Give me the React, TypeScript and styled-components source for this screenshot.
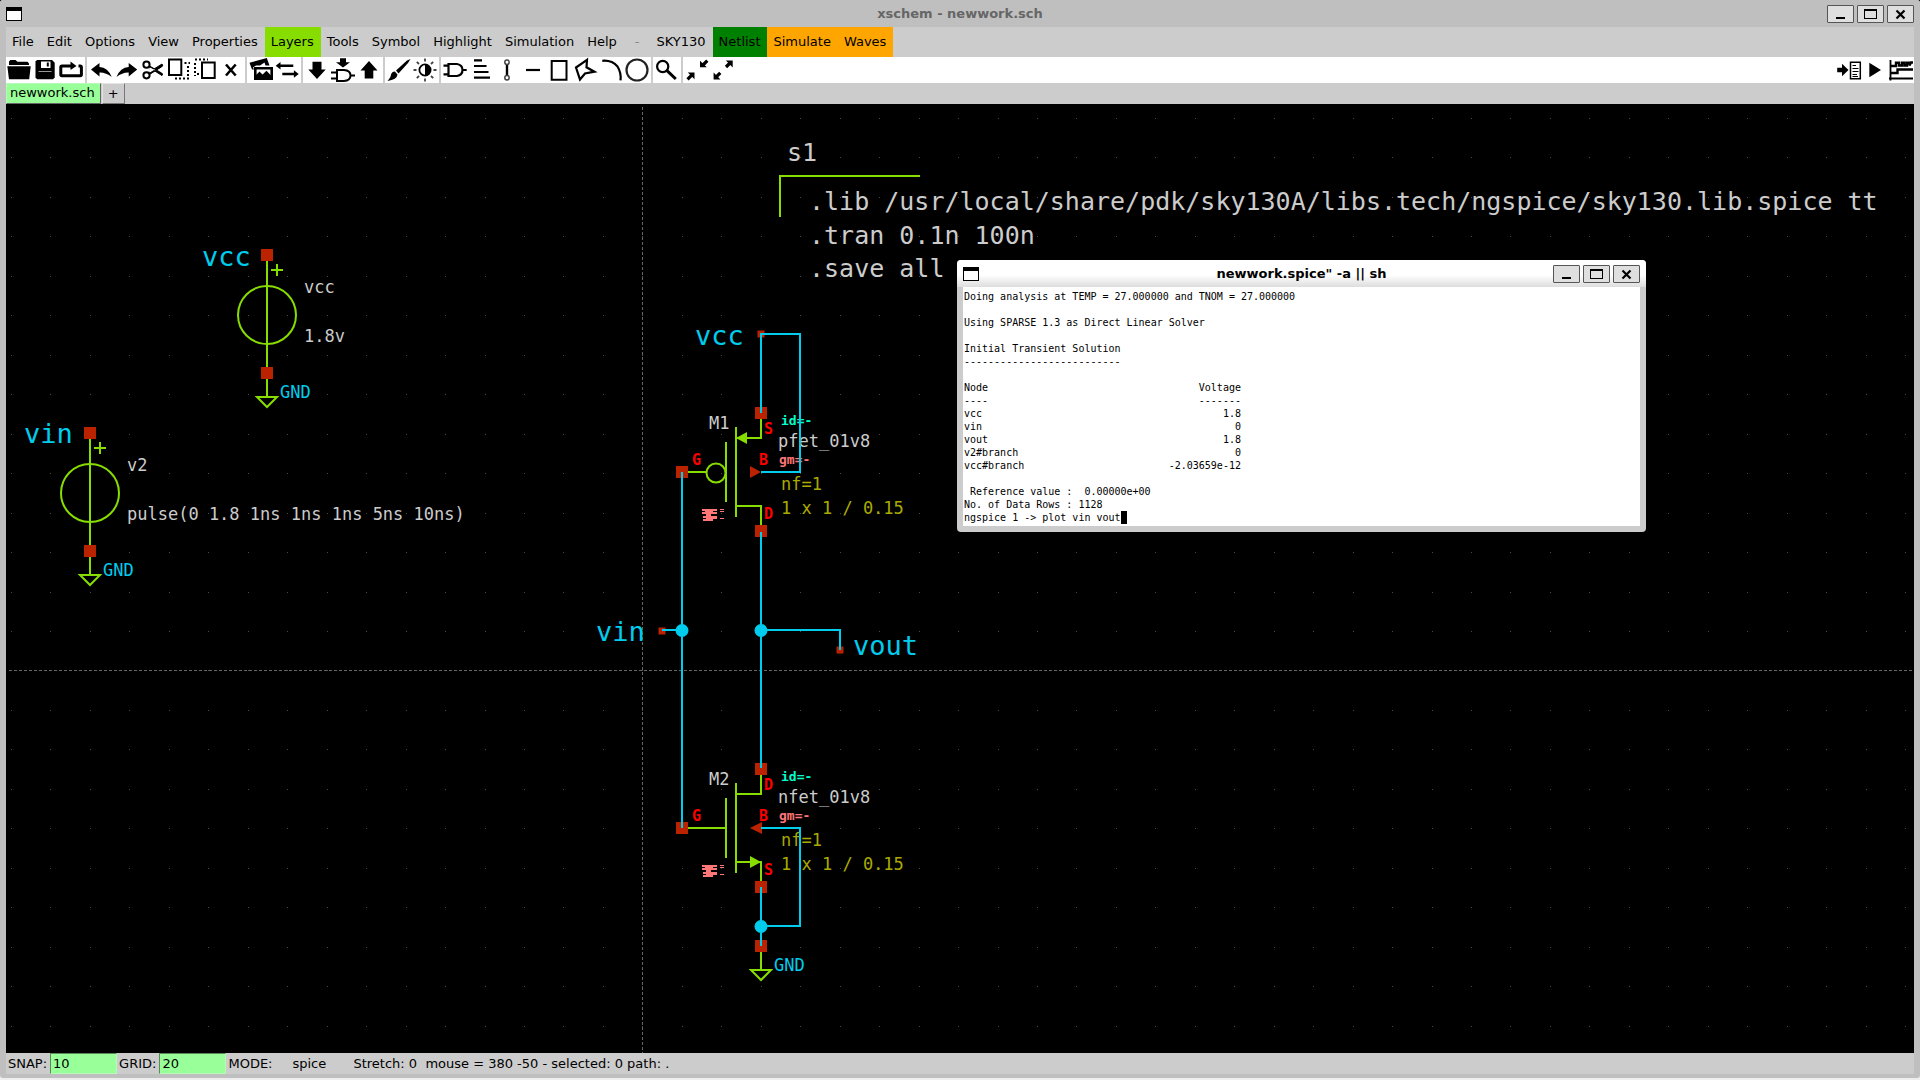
import React from "react";
import styled, { createGlobalStyle } from "styled-components";

const GlobalStyle = createGlobalStyle`
  *, *::before, *::after { box-sizing: border-box; }
  html, body { margin: 0; padding: 0; height: 100%; background: #eeeeee; }
  #root { height: 100%; }
  button, input { font: inherit; color: inherit; margin: 0; }
`;

const green = "#88dd00";
const cyan = "#00ccee";
const pinRed = "#bb2200";
const grey = "#cccccc";
const mono = '"DejaVu Sans Mono", "Liberation Mono", monospace';

/* ---------- window frame ---------- */

const Desktop = styled.div`
  min-height: 100vh;
  height: 100%;
  display: flex;
  padding-bottom: 2px;
  background: linear-gradient(#000000 50%, #eeeeee 50%);
  font-family: "DejaVu Sans", "Noto Sans", sans-serif;
  font-size: 13px;
  line-height: 20px;
  color: #000000;
`;

const MainWindow = styled.main`
  flex: 1;
  min-width: 0;
  display: flex;
  flex-direction: column;
  background: #bfbfbf;
  border-radius: 3px;
  overflow: hidden;
`;

const TitleBar = styled.header<{ $active?: boolean }>`
  display: grid;
  grid-template-columns: 1fr auto 1fr;
  align-items: center;
  height: 27px;
  padding: 1px 6px 0;
  background: ${(p) => (p.$active ? "linear-gradient(#ffffff 55%, #dddddd)" : "#bfbfbf")};
  color: ${(p) => (p.$active ? "#000000" : "#666666")};
`;

const Title = styled.h1`
  margin: 0;
  font-size: 13px;
  line-height: 20px;
  font-weight: bold;
  white-space: pre;
`;

const WindowIcon = styled.button`
  width: 16px;
  height: 14px;
  padding: 0;
  background: #ffffff;
  border: 1px solid #000000;
  border-top-width: 4px;
`;

const WindowButtons = styled.div`
  display: flex;
  justify-content: flex-end;
  gap: 3px;
`;

const WindowButton = styled.button`
  width: 27px;
  height: 18px;
  padding: 0;
  display: grid;
  place-items: center;
  background: #dfdfdf;
  border: 1px solid #555555;
  border-radius: 1px;
  svg { display: block; }
`;

const Frame = styled.div`
  flex: 1;
  min-height: 0;
  display: flex;
  flex-direction: column;
  margin: 0 6px 4px;
  background: ${grey};
`;

/* ---------- menu ---------- */

const MenuBar = styled.nav`
  display: flex;
  height: 30px;
`;

const MenuItem = styled.button<{ $bg?: string; $dim?: boolean }>`
  height: 30px;
  padding: ${(p) => (p.$dim ? "0 11px" : "0 7px 0 6px")};
  border: 0;
  background: ${(p) => p.$bg ?? "transparent"};
  color: ${(p) => (p.$dim ? "#888888" : "#000000")};
`;

/* ---------- toolbar ---------- */

const ToolBar = styled.div`
  display: flex;
  height: 26px;
  background: #ffffff;
`;

const ToolButton = styled.button`
  width: 26px;
  height: 26px;
  padding: 0;
  border: 0;
  background: transparent;
  svg { display: block; }
`;

const ToolSeparator = styled.span`
  width: 2px;
  margin: 0 1px;
  background: ${grey};
`;

const Spacer = styled.span`
  flex: 1;
`;

/* ---------- tabs ---------- */

const TabRow = styled.div`
  display: flex;
  height: 21px;
  gap: 1px;
`;

const Tab = styled.button<{ $active?: boolean }>`
  height: 21px;
  padding: ${(p) => (p.$active ? "0 5px 2px 3px" : "0 5px")};
  line-height: 16px;
  background: ${(p) => (p.$active ? "#99ff99" : grey)};
  border: 1px solid;
  border-color: ${(p) => (p.$active ? "#b8f8b8 #666666 #666666 #b8f8b8" : "#e4e4e4 #777777 #777777 #e4e4e4")};
`;

/* ---------- canvas ---------- */

const Canvas = styled.section`
  position: relative;
  flex: 1;
  min-height: 0;
  background: #000000;
  overflow: hidden;
`;

const Drawing = styled.svg`
  display: block;
  width: 100%;
  height: 100%;
`;

const Label = styled.text<{ $size?: number; $bold?: boolean }>`
  font-family: ${mono};
  font-size: ${(p) => p.$size ?? 17}px;
  font-weight: ${(p) => (p.$bold ? "bold" : "normal")};
  white-space: pre;
`;

/* ---------- terminal window ---------- */

const Terminal = styled.section`
  position: absolute;
  left: 951px;
  top: 156px;
  width: 689px;
  background: ${grey};
  border-radius: 4px;
  overflow: hidden;
`;

const Output = styled.pre`
  margin: 0 6px 6px;
  padding: 3px 1px 2px;
  background: #ffffff;
  font-family: ${mono};
  font-size: 10px;
  line-height: 13px;
`;

const Cursor = styled.span`
  display: inline-block;
  width: 6px;
  height: 13px;
  background: #000000;
  vertical-align: top;
`;

/* ---------- status ---------- */

const StatusBar = styled.footer`
  display: flex;
  align-items: center;
  height: 21px;
  padding-left: 2px;
  white-space: pre;
`;

const StatusLabel = styled.label`
  padding: 0 3px 0 0;
`;

const StatusInput = styled.input`
  width: 67px;
  height: 21px;
  padding: 0 2px;
  margin-right: 2px;
  border: 1px solid;
  border-color: #5a8a5a #b8f8b8 #b8f8b8 #5a8a5a;
  background: #99ff99;
  outline: 0;
`;

const Mode = styled.span`
  width: 64px;
`;

const ModeValue = styled.span`
  width: 61px;
`;

/* ---------- icons ---------- */

type IconDef = { name: string; art: React.ReactNode };

const line = { fill: "none", stroke: "#000", strokeWidth: 2 } as const;

const toolGroups: IconDef[][] = [
  [
    {
      name: "Open",
      art: (
        <>
          <path d="M3 8V4.500L4.500 3h5l2 1.700H21.500L23 6.500V8z" />
          <path d="M1.300 9.300H24.700L23.200 22.300H3z" />
        </>
      ),
    },
    {
      name: "Save",
      art: (
        <>
          <path d="M5 3H20L22.700 5.800V20.500L21 22.200H5L3.500 20.500V4.500z" />
          <path d="M9 4.500h9.500v6.500H9z" fill="#fff" />
          <path d="M14.800 5.500h2v4h-2z" />
          <path d="M6.500 14.500H19.500" stroke="#999" strokeWidth="1" />
        </>
      ),
    },
    {
      name: "Reload",
      art: (
        <>
          <path d="M9 9H4Q2.800 9 2.800 10.200V17.500Q2.800 18.700 4 18.700H22.200Q23.400 18.700 23.400 17.500V10.200Q23.400 9 22.200 9H20.500M7 9H14" {...line} strokeWidth={3} />
          <path d="M12.500 4.500L18.500 8.900L12.500 13z" />
        </>
      ),
    },
  ],
  [
    { name: "Undo", art: <path d="M3 12.500L11.500 6V10Q20 10.500 23.700 20Q18 15.300 11.500 15.500V19.500z" /> },
    { name: "Redo", art: <path d="M23.200 12.500L14.700 6V10Q6.200 10.500 2.500 20Q8.200 15.300 14.700 15.500V19.500z" /> },
    {
      name: "Cut",
      art: (
        <>
          <circle cx="6.500" cy="7.700" r="3.100" {...line} />
          <circle cx="6.500" cy="18.300" r="3.100" {...line} />
          <path d="M9 9.500L14 12L22 7Q24 9 21 10.200L9.500 17.500M9 16.500L14 13.500L22 18.500Q24 17 21 15.700L9.500 9" stroke="#000" strokeWidth="1" />
        </>
      ),
    },
    {
      name: "Copy",
      art: (
        <>
          <path d="M3 2.500H15.300V18H3z" {...line} />
          <path d="M18.500 6H24M9 21.500H23.500M22 9V21" {...line} strokeDasharray="2 2" />
        </>
      ),
    },
    {
      name: "Move",
      art: (
        <>
          <path d="M10 5.500H22.700V21H10z" {...line} />
          <path d="M3 2.500H16M3 6V19M7 17H3" {...line} strokeDasharray="2 2" />
        </>
      ),
    },
    { name: "Delete", art: <path d="M8 7.500L17.700 18.500M17.700 7.500L8 18.500" {...line} strokeWidth={2.6} /> },
  ],
  [
    {
      name: "Insert image",
      art: (
        <>
          <path d="M1.500 5.800L18.800 1L21.500 8.500H17.500L16.500 5.500L12 8.500H8L5 10.500L6 12.500H4z" />
          <path d="M7.300 11.300H23.700V21.700H7.300z" {...line} strokeWidth={2.6} />
          <path d="M8 21V18L11.500 14.500L14.500 17.500L18.500 13.800L23 18.500V21z" />
        </>
      ),
    },
    {
      name: "Swap",
      art: (
        <>
          <path d="M5 8.700H19.300M8.300 17H21" {...line} strokeWidth={2.6} />
          <path d="M1.700 8.700L6.500 5V12.400zM24.700 17L19.900 13.300V20.700z" />
        </>
      ),
    },
  ],
  [
    { name: "Descend", art: <path d="M8.500 4.700H17.500V12.500H21.700L13 22L4.300 12.500H8.500z" /> },
    {
      name: "Descend symbol",
      art: (
        <>
          <path d="M10 1.300h6v4h4L13 10.500L6 5.300h4z" />
          <path d="M7 13H14Q20.500 13.500 20.500 18.500Q20.500 23.500 14 24H7zM1 15.500H7M1 21.500H7M20.500 18.500H25" {...line} />
        </>
      ),
    },
    { name: "Ascend", art: <path d="M8.700 21.500H17.300V13.500H21.500L13 4L4.500 13.500H8.700z" /> },
  ],
  [
    {
      name: "Highlight net",
      art: (
        <>
          <path d="M24.500 2L21 3.500L10 13.500L12.500 16.500L22 6z" />
          <path d="M8.800 14.500L11.500 17.500Q11 22.500 1.500 24Q5 20 5 17.500Q6 14.500 8.800 14.500z" />
        </>
      ),
    },
    {
      name: "Toggle colours",
      art: (
        <>
          <circle cx="13" cy="13" r="5.600" {...line} strokeWidth={1.8} />
          <path d="M13 7.500A5.500 5.500 0 0 1 13 18.500z" />
          <path d="M13 1.500V4.500M13 21.500V24.500M1.500 13H4.500M21.500 13H24.500M4.800 4.800L7 7M19 19L21.200 21.200M21.200 4.800L19 7M7 19L4.800 21.200" fill="none" stroke="#444" strokeWidth="1.800" />
        </>
      ),
    },
  ],
  [
    { name: "Place symbol", art: <path d="M6.500 7H15Q20.500 8 20.500 13Q20.500 18 15 19H6.500zM1.500 8.700H7M1.500 17.300H7M20 13H24.700" {...line} strokeWidth={2.2} /> },
    { name: "Place text", art: <path d="M6 3.300H14M6 9H18.500M6 15H20.500M6 20.700H22" {...line} strokeWidth={2.2} /> },
    {
      name: "Place wire",
      art: (
        <>
          <path d="M13 7.500V18.500" {...line} strokeWidth={2.4} />
          <circle cx="13" cy="5.300" r="2.200" fill="none" stroke="#444" strokeWidth="1.500" />
          <circle cx="13" cy="20.700" r="2.200" fill="none" stroke="#444" strokeWidth="1.500" />
        </>
      ),
    },
    { name: "Place line", art: <path d="M6 13H20" {...line} strokeWidth={2.2} /> },
    { name: "Place rectangle", art: <path d="M5.700 4H20.500V22.700H5.700z" {...line} /> },
    { name: "Place polygon", art: <path d="M15 2.800L4 10.500L8 22.500L13 16.500L22.500 14.700L14.500 10.300z" {...line} strokeWidth={2.2} /> },
    { name: "Place arc", art: <path d="M4.300 3.800Q14 3 19.500 9.500Q23.500 16 22.500 23.300" {...line} strokeWidth={2.2} /> },
    { name: "Place circle", art: <circle cx="13" cy="13" r="10.500" {...line} strokeWidth={2.2} stroke="#222" /> },
  ],
  [
    {
      name: "Zoom box",
      art: (
        <>
          <circle cx="8.700" cy="9.500" r="5.600" {...line} strokeWidth={2.2} />
          <path d="M12.500 13.200L21.800 22" {...line} strokeWidth={3} />
        </>
      ),
    },
  ],
  [
    {
      name: "Zoom out",
      art: (
        <>
          <path d="M3.500 22.300L8 17.800M23.300 3.700L19 8" {...line} strokeWidth={3.2} />
          <path d="M3.800 15.500H10.500V22.300zM22.800 10.300H16V3.700z" />
        </>
      ),
    },
    {
      name: "Zoom fit",
      art: (
        <>
          <path d="M10.300 15.900L6 20.200M16 10L20.500 5.500" {...line} strokeWidth={3.2} />
          <path d="M3.600 15.500V22.500H10.500zM22.700 10.500V3.500H15.900z" />
        </>
      ),
    },
  ],
];

const runTools: IconDef[] = [
  {
    name: "Netlist",
    art: (
      <>
        <path d="M1.200 10.700H6V6.700L12.500 13L6 19.300V15.300H1.200z" />
        <path d="M14.500 5.200H24.300V21.800H14.500z" fill="none" stroke="#000" strokeWidth="1.500" />
        <path d="M16.500 8.500H20M16.500 11.500H22.500M16.500 14.500H22.500M16.500 17.500H21M16.500 19.500H22" fill="none" stroke="#000" strokeWidth="1.200" />
      </>
    ),
  },
  { name: "Simulate", art: <path d="M7.300 5.700L19 13L7.300 20.300z" /> },
  {
    name: "Waves",
    art: (
      <>
        <path d="M2.500 3V23.500M1 21.500H25" {...line} strokeWidth={1.8} />
        <path d="M3 9H8V5.700H11V8.500H14V5.700H16.500V8.500H19V5.700H21.500V8.500L23 5.500H25M3 16H9.500V12.500H25" {...line} strokeWidth={2.4} />
      </>
    ),
  },
];

const Tool = ({ icon }: { icon: IconDef }) => (
  <ToolButton type="button" aria-label={icon.name}>
    <svg width="26" height="26" viewBox="0 0 26 26" aria-hidden="true">
      {icon.art}
    </svg>
  </ToolButton>
);

const Controls = () => (
  <WindowButtons>
    <WindowButton type="button" aria-label="Minimise">
      <svg width="13" height="12" shapeRendering="crispEdges">
        <path d="M2 9h9v2H2z" />
      </svg>
    </WindowButton>
    <WindowButton type="button" aria-label="Maximise">
      <svg width="13" height="12" shapeRendering="crispEdges">
        <path d="M0 1h13v10H0zM1 3v7h11V3z" fillRule="evenodd" />
      </svg>
    </WindowButton>
    <WindowButton type="button" aria-label="Close">
      <svg width="13" height="12">
        <path d="M2.500 2.500L10.500 10.500M10.500 2.500L2.500 10.500" {...line} strokeWidth={2.2} />
      </svg>
    </WindowButton>
  </WindowButtons>
);

/* ---------- schematic ---------- */

const gridStep = 39.46;
const gridPath = Array.from({ length: 26 }, (_, r) =>
  Array.from({ length: 60 }, (_, c) => `M${Math.round(11 + c * gridStep)} ${Math.round(118 + r * gridStep)}h1v1h-1z`).join("")
).join("");

const Pin = ({ x, y, size = 12 }: { x: number; y: number; size?: number }) => (
  <rect x={x - size / 2} y={y - size / 2} width={size} height={size} fill={pinRed} />
);

const Ground = ({ x, y }: { x: number; y: number }) => (
  <g>
    <path d={`M${x} ${y}V${y + 24}M${x - 10} ${y + 24}H${x + 10}L${x} ${y + 34}z`} fill="none" stroke={green} strokeWidth="2" />
    <Label x={x + 13} y={y + 25} fill={cyan}>GND</Label>
    <Pin x={x} y={y} />
  </g>
);

const Source = ({ x, y, name, value }: { x: number; y: number; name: string; value: string }) => (
  <g>
    <path d={`M${x} ${y}V${y + 118}M${x + 4} ${y + 15}h12M${x + 10} ${y + 9}v12`} fill="none" stroke={green} strokeWidth="2" />
    <circle cx={x} cy={y + 60} r="29" fill="none" stroke={green} strokeWidth="2" />
    <Pin x={x} y={y} />
    <Label x={x + 37} y={y + 38} fill={grey}>{name}</Label>
    <Label x={x + 37} y={y + 87} fill={grey}>{value}</Label>
    <Ground x={x} y={y + 118} />
  </g>
);

const Fet = ({ y, name, model, top, bottom, children }: { y: number; name: string; model: string; top: string; bottom: string; children: React.ReactNode }) => (
  <g>
    <g fill="none" stroke={green} strokeWidth="2">
      <path d={`M726 ${y - 30}v60M736 ${y - 45}v90M761 ${y - 59}v25H736M736 ${y + 34}H761v25`} />
    </g>
    {children}
    <Pin x={682} y={y} />
    <Pin x={761} y={y - 59} />
    <Pin x={761} y={y + 59} />
    <path d={`M702 ${y + 37}h15v2h-4v1h4v2h-6v1h-5v-1h-4v-2h3v-1h-3zM703 ${y + 44}h14v3h-4v2h-10v-2h3v-1h-3zM706 ${y + 42}h5v3h-5zM720 ${y + 37}h4v1h-4zM720 ${y + 39}h4v1h-4zM720 ${y + 46}h4v1h-4z`} fill="#ff7777" />
    <Label x={709} y={y - 43} fill={grey}>{name}</Label>
    <Label x={781} y={y - 47} fill="#00ffcc" $size={13} $bold>id=-</Label>
    <Label x={778} y={y - 25} fill={grey}>{model}</Label>
    <Label x={779} y={y - 8} fill="#ff7777" $size={13} $bold>gm=-</Label>
    <Label x={781} y={y + 18} fill="#aaaa00">nf=1</Label>
    <Label x={781} y={y + 42} fill="#aaaa00">1 x 1 / 0.15</Label>
    <g fill="#ff0000">
      <Label x={764} y={y - 38} $size={15} $bold>{top}</Label>
      <Label x={692} y={y - 7} $size={15} $bold>G</Label>
      <Label x={759} y={y - 7} $size={15} $bold>B</Label>
      <Label x={764} y={y + 47} $size={15} $bold>{bottom}</Label>
    </g>
  </g>
);

const Schematic = () => (
  <Drawing role="img" aria-label="Inverter schematic">
    {/* drawing units are window coordinates; the canvas begins at 6,104 */}
    <g transform="translate(-6 -104)">
      <path d={gridPath} fill="#4a4a4a" />
      <path d="M642.500 107V1200M9 670.500H4000" fill="none" stroke="#666666" strokeDasharray="3 2" />

      <Label x={787} y={161} fill={grey} $size={25}>s1</Label>
      <path d="M780 217V176H920" fill="none" stroke={green} strokeWidth="2" />
      <Label x={809} y={210} fill={grey} $size={25}>.lib /usr/local/share/pdk/sky130A/libs.tech/ngspice/sky130.lib.spice tt</Label>
      <Label x={809} y={244} fill={grey} $size={25}>.tran 0.1n 100n</Label>
      <Label x={809} y={277} fill={grey} $size={25}>.save all</Label>

      <Source x={267} y={255} name="vcc" value="1.8v" />
      <Source x={90} y={433} name="v2" value="pulse(0 1.8 1ns 1ns 1ns 5ns 10ns)" />

      <Fet y={472} name="M1" model="pfet_01v8" top="S" bottom="D">
        <path d="M682 472H706" stroke={green} strokeWidth="2" />
        <circle cx="716" cy="473" r="9.500" fill="none" stroke={green} strokeWidth="2" />
        <path d="M736 438L747 432V444z" fill={green} />
        <path d="M761 472L750 466V478z" fill={pinRed} />
      </Fet>
      <Fet y={828} name="M2" model="nfet_01v8" top="D" bottom="S">
        <path d="M682 828H726" stroke={green} strokeWidth="2" />
        <path d="M761 862L750 856V868z" fill={green} />
        <path d="M750 828L762 822V834z" fill={pinRed} />
      </Fet>
      <Ground x={761} y={946} />

      <Pin x={761} y={334} size={7} />
      <Pin x={662} y={631} size={7} />
      <Pin x={840} y={650} size={7} />
      <g fill="none" stroke={cyan} strokeWidth="2">
        <path d="M761 413V334H800V472H761" />
        <path d="M682 472V828M662 630H682" />
        <path d="M761 532V768M761 630H840V650" />
        <path d="M761 828H800V926H761M761 887V946" />
      </g>
      <g fill={cyan}>
        <circle cx="682" cy="630.500" r="6.500" />
        <circle cx="761" cy="630.500" r="6.500" />
        <circle cx="761" cy="926.500" r="6.500" />
        <Label x={202} y={266} $size={27}>vcc</Label>
        <Label x={24} y={443} $size={27}>vin</Label>
        <Label x={695} y={345} $size={27}>vcc</Label>
        <Label x={596} y={641} $size={27}>vin</Label>
        <Label x={853} y={655} $size={27}>vout</Label>
      </g>
    </g>
  </Drawing>
);

const row = (name: string, value: string) => name + value.padStart(46 - name.length);

const terminalLines = [
  "Doing analysis at TEMP = 27.000000 and TNOM = 27.000000",
  "",
  "Using SPARSE 1.3 as Direct Linear Solver",
  "",
  "Initial Transient Solution",
  "-".repeat(26),
  "",
  row("Node", "Voltage"),
  row("----", "-------"),
  row("vcc", "1.8"),
  row("vin", "0"),
  row("vout", "1.8"),
  row("v2#branch", "0"),
  row("vcc#branch", "-2.03659e-12"),
  "",
  " Reference value :  0.00000e+00",
  "No. of Data Rows : 1128",
  "ngspice 1 -> plot vin vout",
];

const menus: { label: string; bg?: string; dim?: boolean }[] = [
  { label: "File" },
  { label: "Edit" },
  { label: "Options" },
  { label: "View" },
  { label: "Properties" },
  { label: "Layers", bg: green },
  { label: "Tools" },
  { label: "Symbol" },
  { label: "Highlight" },
  { label: "Simulation" },
  { label: "Help" },
  { label: "-", dim: true },
  { label: "SKY130" },
  { label: "Netlist", bg: "#008000" },
  { label: "Simulate", bg: "#ffa500" },
  { label: "Waves", bg: "#ffa500" },
];

export default function App() {
  return (
    <>
      <GlobalStyle />
      <Desktop>
        <MainWindow>
          <TitleBar>
            <WindowIcon type="button" aria-label="Window menu" />
            <Title>xschem - newwork.sch</Title>
            <Controls />
          </TitleBar>
          <Frame>
            <MenuBar>
              {menus.map((m) => (
                <MenuItem key={m.label} type="button" $bg={m.bg} $dim={m.dim}>
                  {m.label}
                </MenuItem>
              ))}
            </MenuBar>
            <ToolBar role="toolbar">
              {toolGroups.map((group, i) => (
                <React.Fragment key={i}>
                  {i > 0 && <ToolSeparator />}
                  {group.map((icon) => (
                    <Tool key={icon.name} icon={icon} />
                  ))}
                </React.Fragment>
              ))}
              <Spacer />
              {runTools.map((icon) => (
                <Tool key={icon.name} icon={icon} />
              ))}
            </ToolBar>
            <TabRow>
              <Tab type="button" $active>newwork.sch</Tab>
              <Tab type="button">+</Tab>
            </TabRow>
            <Canvas>
              <Schematic />
              <Terminal>
                <TitleBar as="div" $active>
                  <WindowIcon type="button" aria-label="Window menu" />
                  <Title as="h2">newwork.spice" -a || sh</Title>
                  <Controls />
                </TitleBar>
                <Output>
                  {terminalLines.join("\n")}
                  <Cursor />
                </Output>
              </Terminal>
            </Canvas>
            <StatusBar>
              <StatusLabel htmlFor="snap">SNAP:</StatusLabel>
              <StatusInput id="snap" defaultValue="10" />
              <StatusLabel htmlFor="grid">GRID:</StatusLabel>
              <StatusInput id="grid" defaultValue="20" />
              <Mode>MODE:</Mode>
              <ModeValue>spice</ModeValue>
              <span>{"Stretch: 0  mouse = 380 -50 - selected: 0 path: ."}</span>
            </StatusBar>
          </Frame>
        </MainWindow>
      </Desktop>
    </>
  );
}
